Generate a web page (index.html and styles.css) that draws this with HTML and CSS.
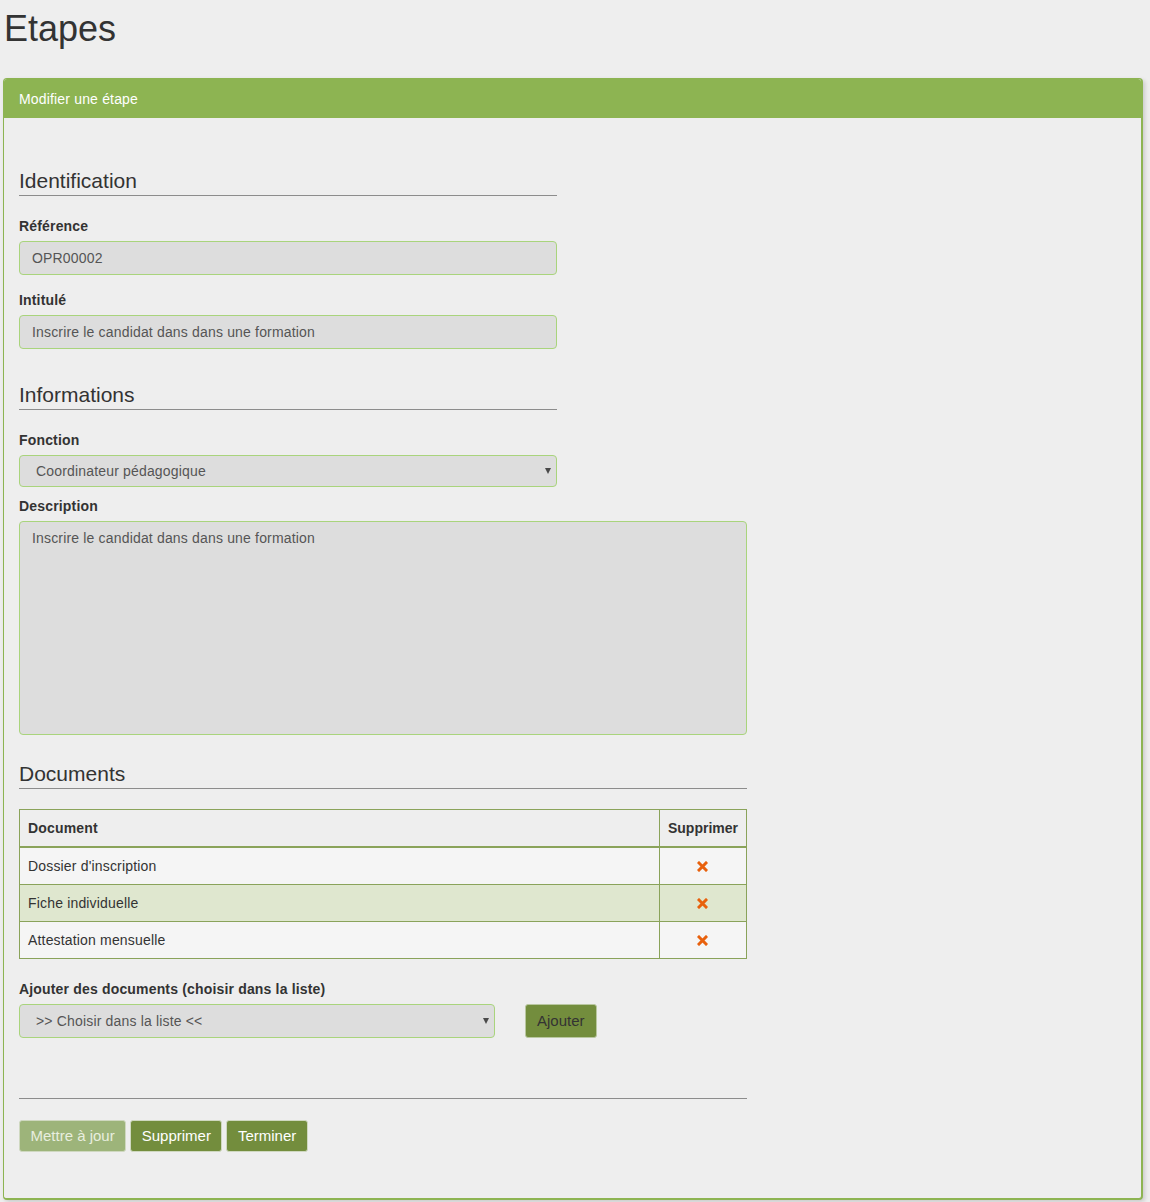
FILE: index.html
```html
<!DOCTYPE html>
<html lang="fr">
<head>
  <meta charset="UTF-8">
  <meta name="viewport" content="width=device-width, initial-scale=1.0">
  <title>Etapes</title>
  <link rel="stylesheet" href="styles.css">
</head>
<body>
  <h1 class="page-title">Etapes</h1>

  <div class="panel">
    <div class="panel-heading">Modifier une étape</div>
    <div class="panel-body">
      <form>
        <div class="section narrow">
          <div class="legend">Identification</div>
          <div class="form-group">
            <label for="reference">Référence</label>
            <input type="text" id="reference" class="form-control" value="OPR00002" readonly>
          </div>
          <div class="form-group">
            <label for="intitule">Intitulé</label>
            <input type="text" id="intitule" class="form-control" value="Inscrire le candidat dans dans une formation">
          </div>
        </div>

        <div class="section narrow">
          <div class="legend">Informations</div>
          <div class="form-group tight">
            <label for="fonction">Fonction</label>
            <div class="select-wrap">
              <select id="fonction" class="form-control select">
                <option>Coordinateur pédagogique</option>
              </select>
            </div>
          </div>
        </div>

        <div class="section flush wide">
          <div class="form-group">
            <label for="description">Description</label>
            <textarea id="description" class="form-control textarea">Inscrire le candidat dans dans une formation</textarea>
          </div>
        </div>

        <div class="section docs wide">
          <div class="legend">Documents</div>
          <table class="doc-table">
            <thead>
              <tr>
                <th>Document</th>
                <th class="col-del">Supprimer</th>
              </tr>
            </thead>
            <tbody>
              <tr>
                <td>Dossier d'inscription</td>
                <td class="col-del"><span class="remove"><svg width="11" height="11" viewBox="0 0 11 11"><path d="M2 2 L9 9 M9 2 L2 9" stroke="#e8610d" stroke-width="3" stroke-linecap="square"/></svg></span></td>
              </tr>
              <tr>
                <td>Fiche individuelle</td>
                <td class="col-del"><span class="remove"><svg width="11" height="11" viewBox="0 0 11 11"><path d="M2 2 L9 9 M9 2 L2 9" stroke="#e8610d" stroke-width="3" stroke-linecap="square"/></svg></span></td>
              </tr>
              <tr>
                <td>Attestation mensuelle</td>
                <td class="col-del"><span class="remove"><svg width="11" height="11" viewBox="0 0 11 11"><path d="M2 2 L9 9 M9 2 L2 9" stroke="#e8610d" stroke-width="3" stroke-linecap="square"/></svg></span></td>
              </tr>
            </tbody>
          </table>

          <div class="form-group add-doc">
            <label for="newDoc">Ajouter des documents (choisir dans la liste)</label>
            <div class="add-row">
              <div class="select-wrap add-select">
                <select id="newDoc" class="form-control select">
                  <option>&gt;&gt; Choisir dans la liste &lt;&lt;</option>
                </select>
              </div>
              <button type="button" class="btn btn-add">Ajouter</button>
            </div>
          </div>

          <hr class="separator">

          <div class="actions">
            <button type="button" class="btn btn-light">Mettre à jour</button>
            <button type="button" class="btn btn-dark">Supprimer</button>
            <button type="button" class="btn btn-dark">Terminer</button>
          </div>
        </div>
      </form>
    </div>
  </div>
</body>
</html>
```

FILE: styles.css
```css
body {
  margin: 0;
  padding: 0 0 2px 0;
  background: #eeeeee;
  font-family: "Liberation Sans", Arial, sans-serif;
  font-size: 14px;
  line-height: 20px;
  letter-spacing: 0.17px;
  color: #333333;
}
.page-title {
  margin: 9px 0 29px 4px;
  font-size: 36px;
  font-weight: normal;
  line-height: 40px;
  letter-spacing: 0;
  color: #333333;
}
.panel {
  margin: 0 7px 0 3px;
  background: #eeeeee;
  border: 1px solid #8db452;
  border-right-width: 2px;
  border-bottom-width: 2px;
  border-radius: 4px;
  box-shadow: 2px 2px 4px rgba(0, 0, 0, 0.15);
}
.panel-heading {
  background: #8db452;
  color: #ffffff;
  padding: 10px 15px 9px 15px;
  border-radius: 3px 3px 0 0;
}
.panel-body {
  padding: 17px 15px 46px 15px;
}
.section {
  margin-top: 32px;
}
.section.flush {
  margin-top: 0;
}
.narrow {
  width: 538px;
}
.wide {
  width: 728px;
}
.legend {
  font-size: 21px;
  line-height: 28px;
  letter-spacing: 0;
  color: #333333;
  border-bottom: 1px solid #8c8c8c;
  margin-bottom: 20px;
}
.form-group {
  margin-bottom: 15px;
}
.form-group.tight {
  margin-bottom: 9px;
}
label {
  display: block;
  font-weight: bold;
  margin-bottom: 5px;
}
.form-control {
  display: block;
  width: 100%;
  box-sizing: border-box;
  height: 34px;
  padding: 6px 12px;
  font-family: "Liberation Sans", Arial, sans-serif;
  font-size: 14px;
  line-height: 20px;
  letter-spacing: 0.17px;
  color: #555555;
  background: #dddddd;
  border: 1px solid #a9d47c;
  border-radius: 4px;
  outline: none;
}
.select-wrap {
  position: relative;
}
.select {
  height: 32px;
  padding: 5px 16px;
  appearance: none;
  -webkit-appearance: none;
}
.select-wrap::after {
  content: "";
  position: absolute;
  right: 6px;
  top: 13px;
  width: 0;
  height: 0;
  border-left: 3.5px solid transparent;
  border-right: 3.5px solid transparent;
  border-top: 6px solid #4a4a4a;
  pointer-events: none;
}
.textarea {
  height: 214px;
  resize: none;
}
.docs {
  margin-top: 25px;
}
.doc-table {
  width: 100%;
  border-collapse: collapse;
  border: 1px solid #8aa35a;
  margin-bottom: 20px;
}
.doc-table th,
.doc-table td {
  border: 1px solid #8aa35a;
  padding: 8px;
  text-align: left;
}
.doc-table th {
  background: #eeeeee;
  border-bottom: 2px solid #8aa35a;
}
.doc-table th.col-del {
  letter-spacing: 0;
}
.doc-table tbody tr:nth-child(odd) td {
  background: #f5f5f5;
}
.doc-table tbody tr:nth-child(even) td {
  background: #dfe7cf;
}
.doc-table .col-del {
  width: 1%;
  white-space: nowrap;
  text-align: center;
}
.remove svg {
  display: inline-block;
  vertical-align: -1px;
}
.add-row {
  display: flex;
  align-items: center;
  gap: 30px;
}
.add-select {
  width: 476px;
}
.add-select .select {
  height: 34px;
  padding: 6px 16px;
}
.add-select::after {
  top: 14px;
}
.btn {
  box-sizing: border-box;
  height: 32px;
  font-family: "Liberation Sans", Arial, sans-serif;
  font-size: 15px;
  line-height: 18px;
  letter-spacing: 0;
  padding: 6px 10.5px;
  border: 1px solid #cfd8c0;
  border-radius: 3px;
  cursor: pointer;
}
.btn-add {
  height: 34px;
  padding: 7px 11px;
  background: #738d3d;
  color: #333333;
  border-color: #b9c7a0;
}
.separator {
  border: none;
  border-top: 1px solid #8c8c8c;
  margin: 60px 0 21px 0;
}
.actions {
  display: flex;
  gap: 4px;
}
.btn-light {
  background: #9db47a;
  color: #e8eedf;
}
.btn-dark {
  background: #738d3d;
  color: #ffffff;
}
```
